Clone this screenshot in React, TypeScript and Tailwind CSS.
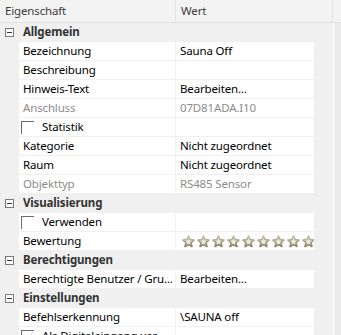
import React from "react";

const Star = () => (
  <svg width="13" height="13" viewBox="0 0 13 13" className="shrink-0">
    <defs>
      <linearGradient id="sg" x1="0" y1="0" x2="0" y2="1">
        <stop offset="0" stopColor="#c9c2ac" />
        <stop offset="1" stopColor="#8a826c" />
      </linearGradient>
    </defs>
    <path
      d="M6.5 1 L8.1 4.6 L12 5 L9 7.6 L9.9 11.5 L6.5 9.5 L3.1 11.5 L4 7.6 L1 5 L4.9 4.6 Z"
      fill="#eeebe2"
      stroke="url(#sg)"
      strokeWidth="1.7"
      strokeLinejoin="round"
    />
  </svg>
);

const Minus = () => (
  <div className="w-[9px] h-[9px] border border-[#7a7a7a] bg-white flex items-center justify-center">
    <div className="w-[5px] h-px bg-[#333]" />
  </div>
);

const Category = ({ label }: { label: string }) => (
  <div className="h-[19px] flex items-center bg-[#f0f0f0] border-b border-[#f0f0f0]">
    <div className="w-[19px] flex items-center pl-[5px]">
      <Minus />
    </div>
    <div className="pl-[4px] font-bold text-[#333]">{label}</div>
  </div>
);

const Checkbox = ({ checked }: { checked?: boolean }) => (
  <div className="relative w-[13px] h-[13px] border-t border-l border-[#6b6b6b] mr-[8px] shrink-0">
    {checked && (
      <svg width="11" height="11" viewBox="0 0 11 11" className="absolute left-[1px] top-[1px]">
        <path d="M2 5.5 L4.3 7.8 L9 3" fill="none" stroke="#222" strokeWidth="1.5" />
      </svg>
    )}
  </div>
);

type RowProps = {
  name: React.ReactNode;
  value?: React.ReactNode;
  disabled?: boolean;
  check?: boolean;
  checked?: boolean;
};

const Row = ({ name, value, disabled, check, checked }: RowProps) => (
  <div className="h-[19px] flex border-b border-[#f0f0f0]">
    <div className="w-[19px] bg-[#f0f0f0]" />
    <div
      className={
        "w-[157px] bg-white pl-[4px] flex items-center whitespace-nowrap overflow-hidden border-r border-[#f0f0f0] " +
        (disabled ? "text-[#8c8c8c]" : "text-black")
      }
    >
      {check && (
        <div className="-ml-[2px] flex items-center">
          <Checkbox checked={checked} />
        </div>
      )}
      {name}
    </div>
    <div
      className={
        "w-[138px] bg-white pl-[4px] flex items-center whitespace-nowrap overflow-hidden " +
        (disabled ? "text-[#8c8c8c]" : "text-black")
      }
    >
      {value}
    </div>
    <div className="flex-1 bg-[#f0f0f0]" />
  </div>
);

export default function App() {
  return (
    <div className="w-[341px] h-[335px] overflow-hidden bg-[#f0f0f0] text-[11.5px] tracking-[-0.15px] leading-[16px] font-['Segoe_UI','Noto_Sans',sans-serif]">
      <div className="h-[23px] flex border-b border-[#e3e3e3] bg-[#f3f3f3] text-[#3c3c3c]">
        <div className="w-[176px] pl-[5px] flex items-center border-r border-[#e3e3e3]">Eigenschaft</div>
        <div className="w-[157px] pl-[5px] flex items-center border-r border-[#e3e3e3]">Wert</div>
        <div className="flex-1" />
      </div>
      <div className="flex">
        <div className="w-[333px]">
          <Category label="Allgemein" />
          <Row name="Bezeichnung" value="Sauna Off" />
          <Row name="Beschreibung" value="" />
          <Row name="Hinweis-Text" value="Bearbeiten..." />
          <Row name="Anschluss" value="07D81ADA.I10" disabled />
          <Row name="Statistik" check />
          <Row name="Kategorie" value="Nicht zugeordnet" />
          <Row name="Raum" value="Nicht zugeordnet" />
          <Row name="Objekttyp" value="RS485 Sensor" disabled />
          <Category label="Visualisierung" />
          <Row name="Verwenden" check />
          <Row
            name="Bewertung"
            value={
              <div className="flex gap-[2px] pl-[2px]">
                {Array.from({ length: 9 }).map((_, i) => (
                  <Star key={i} />
                ))}
              </div>
            }
          />
          <Category label="Berechtigungen" />
          <Row name="Berechtigte Benutzer / Gru..." value="Bearbeiten..." />
          <Category label="Einstellungen" />
          <Row name="Befehlserkennung" value="\SAUNA off" />
          <Row name="Als Digitaleingang ver..." check checked />
        </div>
        <div className="w-px bg-white self-stretch" />
        <div className="flex-1 bg-[#ececec]" />
      </div>
    </div>
  );
}
